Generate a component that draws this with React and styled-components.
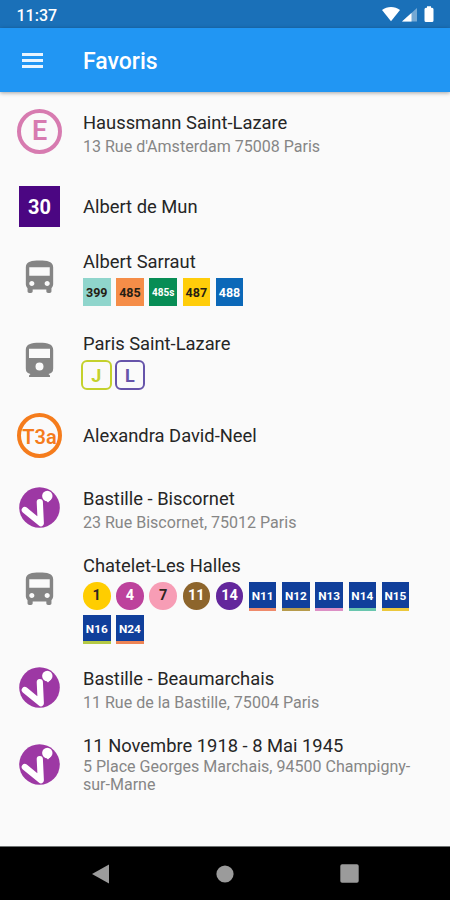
import React from "react";
import styled, { createGlobalStyle } from "styled-components";

const stops = [
	{ icon: "ring", label: "E", color: "#d77bb0", title: "Haussmann Saint-Lazare", address: "13 Rue d'Amsterdam 75008 Paris" },
	{ icon: "square", label: "30", color: "#4b0682", title: "Albert de Mun", single: true },
	{
		icon: "bus",
		title: "Albert Sarraut",
		top: 12,
		lines: [
			{ name: "399", bg: "#8fd5cc" },
			{ name: "485", bg: "#f58d48" },
			{ name: "485s", bg: "#078d55", light: true, small: true },
			{ name: "487", bg: "#ffcd0a" },
			{ name: "488", bg: "#0b68b8", light: true },
		],
	},
	{
		icon: "train",
		title: "Paris Saint-Lazare",
		lines: [
			{ name: "J", bg: "#c4d12c", kind: "rail" },
			{ name: "L", bg: "#6654aa", kind: "rail" },
		],
	},
	{ icon: "ring", label: "T3a", color: "#f57c1c", title: "Alexandra David-Neel", single: true },
	{ icon: "velib", title: "Bastille - Biscornet", address: "23 Rue Biscornet, 75012 Paris" },
	{
		icon: "bus",
		title: "Chatelet-Les Halles",
		height: 97.5,
		top: 4,
		lines: [
			{ name: "1", bg: "#ffcd00", kind: "metro" },
			{ name: "4", bg: "#bd429c", kind: "metro", light: true },
			{ name: "7", bg: "#f79db5", kind: "metro" },
			{ name: "11", bg: "#8d652c", kind: "metro", light: true },
			{ name: "14", bg: "#63279c", kind: "metro", light: true },
			{ name: "N11", stripe: "#ef8a6b" },
			{ name: "N12", stripe: "#b79b4c" },
			{ name: "N13", stripe: "#dc8fc5" },
			{ name: "N14", stripe: "#69c6ae" },
			{ name: "N15", stripe: "#ecc83c" },
			{ name: "N16", stripe: "#b4c944" },
			{ name: "N24", stripe: "#ee8455" },
		],
	},
	{ icon: "velib", title: "Bastille - Beaumarchais", address: "11 Rue de la Bastille, 75004 Paris" },
	{
		icon: "velib",
		title: "11 Novembre 1918 - 8 Mai 1945",
		address: "5 Place Georges Marchais, 94500 Champigny-sur-Marne",
		top: 4,
		iconTop: 13.5,
		compact: true,
	},
];

function StopIcon({ stop }) {
	switch (stop.icon) {
		case "ring":
			return <Ring $color={stop.color} $small={stop.label.length > 1}>{stop.label}</Ring>;
		case "square":
			return <Square $color={stop.color}>{stop.label}</Square>;
		case "bus":
			return (
				<svg width="41" height="41" viewBox="0 0 24 24" fill="#858585">
					<path d="M4 16c0 .88.39 1.67 1 2.22V20c0 .55.45 1 1 1h1c.55 0 1-.45 1-1v-1h8v1c0 .55.45 1 1 1h1c.55 0 1-.45 1-1v-1.78c.61-.55 1-1.34 1-2.22V6c0-3.5-3.58-4-8-4s-8 .5-8 4v10zm3.5 1c-.83 0-1.5-.67-1.5-1.5S6.67 14 7.5 14s1.5.67 1.5 1.5S8.33 17 7.5 17zm9 0c-.83 0-1.5-.67-1.5-1.5s.67-1.5 1.5-1.5 1.5.67 1.5 1.5-.67 1.5-1.5 1.5zm1.5-6H6V6h12v5z" />
				</svg>
			);
		case "train":
			return (
				<svg width="41" height="41" viewBox="0 0 41 41" fill="#858585" fillRule="evenodd">
					<path d="M6.8 10C6.8 4 12 2.7 20.5 2.7S34.2 4 34.2 10V28.5Q34.2 33 29.5 34L31 35.5V37H10V35.5L11.5 34Q6.8 33 6.8 28.500ZM10 8.800v9.200h21V8.800ZM20.500 22.500a4 4 0 1 0 0 8 4 4 0 0 0 0-8Z" />
				</svg>
			);
		default:
			return (
				<svg width="41" height="41" viewBox="0 0 41 41">
					<circle cx="20.5" cy="20.5" r="20.3" fill="#9d38a4" />
					<path d="M5.8 23 21.8 36.2 20.8 15" fill="none" stroke="#fff" strokeWidth="6.2" strokeLinecap="round" strokeLinejoin="round" />
					<circle cx="28.3" cy="9" r="5.2" fill="#fff" />
					<path d="M26.5 13 29 15.5 32 12.300Z" fill="#fff" />
				</svg>
			);
	}
}

function LineBadge({ line }) {
	if (line.kind === "rail") return <RailBadge $color={line.bg}>{line.name}</RailBadge>;
	if (line.kind === "metro") return <MetroBadge $bg={line.bg} $light={line.light}>{line.name}</MetroBadge>;
	if (line.stripe) return <NightBadge $stripe={line.stripe}>{line.name}</NightBadge>;
	return <BusBadge $bg={line.bg} $light={line.light} $small={line.small}>{line.name}</BusBadge>;
}

function App() {
	return (
		<>
			<GlobalStyle />
			<Screen>
				<StatusBar>
					<Clock>11:37</Clock>
					<StatusIcons>
						<svg width="54" height="18" viewBox="0 0 54 18" fill="#fff">
							<path d="M1 5C6 .9 14 .9 19 5L10 16.3Z" />
							<path d="M36 3V16.5H21Z" opacity=".4" />
							<path d="M30.5 8V16.5H21Z" />
							<path d="M46 1.2h4v1.500h1q1.500 0 1.500 1.500v11.300q0 1.500-1.500 1.500h-6q-1.500 0-1.500-1.500V4.200q0-1.500 1.500-1.500h1z" />
						</svg>
					</StatusIcons>
				</StatusBar>
				<AppBar>
					<MenuButton aria-label="Menu">
						<MenuLine />
						<MenuLine />
						<MenuLine />
					</MenuButton>
					<PageTitle>Favoris</PageTitle>
				</AppBar>
				<StopList>
					{stops.map((stop) => (
						<StopRow key={stop.title} $single={stop.single} $height={stop.height}>
							<IconSlot $top={stop.single ? 9.4 : stop.iconTop ?? (stop.icon === "ring" ? 16.5 : 18.5)}>
								<StopIcon stop={stop} />
							</IconSlot>
							<StopInfo $top={stop.top ?? (stop.single ? 21 : stop.lines ? 11.5 : 19.5)}>
								<StopName>{stop.title}</StopName>
								{stop.address && <Address $compact={stop.compact}>{stop.address}</Address>}
								{stop.lines && (
									<Lines $rail={stop.icon === "train"}>
										{stop.lines.map((line) => (
											<LineBadge key={line.name} line={line} />
										))}
									</Lines>
								)}
							</StopInfo>
						</StopRow>
					))}
				</StopList>
				<SystemNav>
					<svg width="18" height="20" viewBox="0 0 18 20" fill="#9b9b9b"><path d="M0 10 17 .5v19z" /></svg>
					<svg width="18" height="18" viewBox="0 0 18 18" fill="#9b9b9b"><circle cx="9" cy="9" r="8.6" /></svg>
					<svg width="19" height="19" viewBox="0 0 19 19" fill="#9b9b9b"><rect x=".3" y=".3" width="18.4" height="18.4" rx="1.8" /></svg>
				</SystemNav>
			</Screen>
		</>
	);
}

const GlobalStyle = createGlobalStyle`
	* {
		box-sizing: border-box;
	}
	body {
		margin: 0;
		background: #fafafa;
		font-family: Roboto, sans-serif;
	}
	svg {
		display: block;
	}
`;
const Screen = styled.div`
	width: 450px;
	height: 900px;
	display: flex;
	flex-direction: column;
	overflow: hidden;
	background: #fafafa;
`;
const StatusBar = styled.header`
	height: 28px;
	flex-shrink: 0;
	display: flex;
	justify-content: space-between;
	padding: 5px 15px 0 16.5px;
	background: #1a70b8;
	color: #fff;
`;
const Clock = styled.span`
	font-size: 16px;
	line-height: 21px;
	font-weight: 500;
`;
const StatusIcons = styled.div`
	height: 18px;
`;
const AppBar = styled.nav`
	height: 64px;
	flex-shrink: 0;
	display: flex;
	align-items: center;
	padding-left: 22px;
	background: #2196f3;
	color: #fff;
	box-shadow: 0 1px 4px rgba(0, 0, 0, 0.35);
	z-index: 1;
`;
const MenuButton = styled.button`
	width: 21px;
	height: 15px;
	padding: 0;
	border: 0;
	background: none;
	display: flex;
	flex-direction: column;
	justify-content: space-between;
`;
const MenuLine = styled.span`
	width: 100%;
	height: 3px;
	background: #e9f5ff;
`;
const PageTitle = styled.h1`
	margin: 4px 0 0 40px;
	font-size: 23px;
	line-height: 28px;
	font-weight: 500;
`;
const StopList = styled.ul`
	flex: 1;
	margin: 0;
	padding: 0;
	list-style: none;
`;
const StopRow = styled.li`
	height: ${(p) => p.$height || (p.$single ? 64.3 : 82.5)}px;
	display: flex;
	align-items: flex-start;
`;
const IconSlot = styled.div`
	width: 79px;
	flex-shrink: 0;
	padding-top: ${(p) => p.$top}px;
	display: flex;
	justify-content: center;
`;
const StopInfo = styled.div`
	width: 340px;
	margin-left: 4px;
	padding-top: ${(p) => p.$top}px;
`;
const StopName = styled.div`
	font-size: 18.35px;
	line-height: 21px;
	color: #262626;
	white-space: nowrap;
`;
const Address = styled.div`
	margin-top: ${(p) => (p.$compact ? 2 : 5)}px;
	font-size: 16.05px;
	line-height: 18.5px;
	color: #868686;
`;
const Lines = styled.div`
	display: flex;
	flex-wrap: wrap;
	gap: ${(p) => (p.$rail ? "3px" : "4.3px 5.7px")};
	margin: ${(p) => (p.$rail ? "6px 0 0 -2px" : "6.5px 0 0")};
`;
const Ring = styled.div`
	width: 45px;
	height: 45px;
	border: 4px solid ${(p) => p.$color};
	border-radius: 50%;
	display: flex;
	align-items: center;
	justify-content: center;
	padding-top: ${(p) => (p.$small ? 2 : 0)}px;
	font-size: ${(p) => (p.$small ? 20 : 27)}px;
	font-weight: 600;
	color: ${(p) => p.$color};
`;
const Square = styled.div`
	width: 41px;
	height: 41px;
	margin-top: 2.5px;
	display: flex;
	align-items: center;
	justify-content: center;
	background: ${(p) => p.$color};
	color: #fff;
	font-size: 20px;
	font-weight: 700;
`;
const Badge = styled.span`
	width: 27.5px;
	height: 27.5px;
	display: flex;
	align-items: center;
	justify-content: center;
	font-size: 12px;
	font-weight: 700;
`;
const BusBadge = styled(Badge)`
	background: ${(p) => p.$bg};
	color: ${(p) => (p.$light ? "#fff" : "#252014")};
	font-size: ${(p) => (p.$small ? 10 : 12.5)}px;
`;
const MetroBadge = styled(Badge)`
	border-radius: 50%;
	background: ${(p) => p.$bg};
	color: ${(p) => (p.$light ? "#fff" : "#302620")};
	font-size: 14.5px;
`;
const NightBadge = styled(Badge)`
	height: 29px;
	padding-top: 1px;
	background: #103f9b;
	border-bottom: 3px solid ${(p) => p.$stripe};
	color: #fff;
	font-size: 11.8px;
`;
const RailBadge = styled(Badge)`
	width: 30.5px;
	height: 30.5px;
	border: 2px solid ${(p) => p.$color};
	border-radius: 6px;
	color: ${(p) => p.$color};
	font-size: 18px;
`;
const SystemNav = styled.footer`
	height: 54px;
	flex-shrink: 0;
	display: flex;
	align-items: center;
	justify-content: space-between;
	padding: 0 91px 0 92px;
	background: #000;
	border-top: 1px solid #6f7373;
`;

export default App;
